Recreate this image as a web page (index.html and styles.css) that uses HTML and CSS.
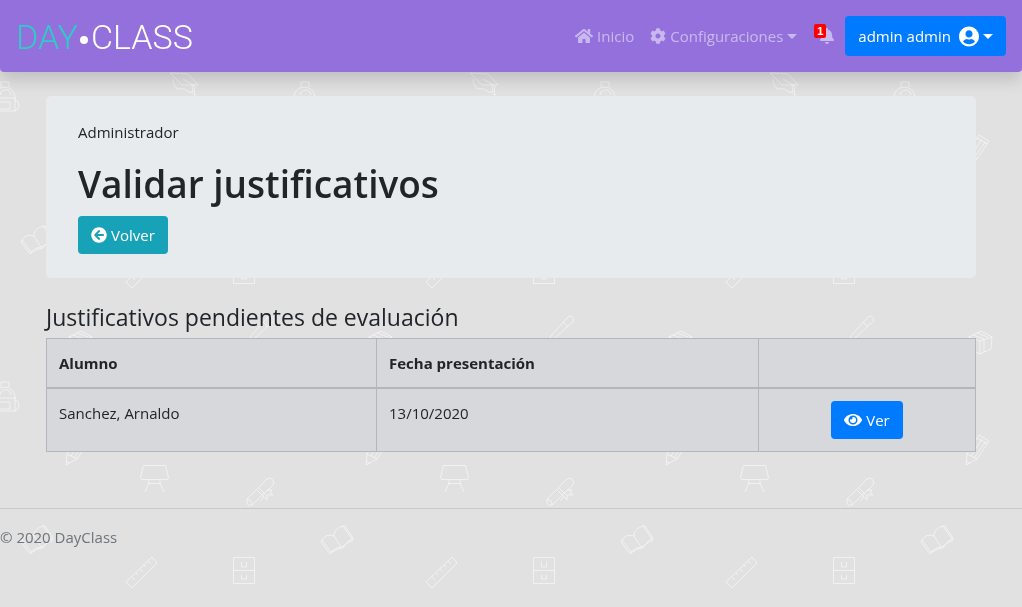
FILE: index.html
```html
<!DOCTYPE html>
<html lang="es">
<head>
<meta charset="utf-8">
<meta name="viewport" content="width=device-width, initial-scale=1">
<title>DayClass - Validar justificativos</title>
<link rel="stylesheet" href="styles.css">
</head>
<body>
<svg class="backdrop" aria-hidden="true">
  <defs>
    <pattern id="school" width="300" height="300" patternUnits="userSpaceOnUse">
      <g class="doodle">
        <g id="backpack"><path d="M1 87v-5h8v5M-6 97C-5 84 14 84 15 97v14h-20zM0 95c1-7 10-7 11 0M-6 98h22M-1 102h11v7h-11zM15 100q4 1 4 5t-4 6M-5 100q-4 1-4 5t4 6"/></g>
        <use href="#backpack" x="300"/>
        <path d="M170 73l18 1 10 11-16 0zM173 79c0 4 2 9 5 10q8-1 10 3h5l-1-7M183 79l12 7-1 9 2-1"/>
        <path d="M22 240C26 234 30 235 34 236C34 230 38 228 43 226L52 239C46 241 47 246 41 247Q36 247 31 252zM34 236L41 247M22 240l-1 2 9 12 2-2M43 226l2 0 8 12-1 3q-6 1-9 7-6 0-12 5"/>
        <path d="M152 257l5 6-25 25-6-6zM148 261l3 3M144 265l2 2M140 269l3 3M136 273l2 2M132 277l3 3"/>
        <path d="M233.500 257.500h21v26h-21zM233 270.500h22M241.500 262v5h5v-5M241.500 275v4h5v-4"/>
        <path d="M250 37l17-19q4-4 6 0t-3 6l-17 16zM263 22l5 5"/>
        <path d="M69 37l12-6 11 6-1 12-11 5-11-5zM69 37l11 4 12-4M80 41v13M73 35l11 4M77 33l11 4M84 39v13"/>
        <path d="M67 154l12-19 10 6-12 18-11 6zM67 154l10 5M71 156l11-17M74 158l12-17M66 161l3 2M77 138l10 6"/>
        <path d="M143.500 165.500h22l3 12-1 2h-26l-1-2zM149 180v3M160 180v3M149 183l-4 9M160 183l4 9M148 183.500h13"/>
        <path d="M247 199l20-20q4-2 6 1t-1 6l-20 19q-6 2-5-6zM247 200q5-1 5 5M259 188l7 7M257 190l7 7M267 190l5 0-2 3 3 2-6 0 0 5-3-3-4 4"/>
      </g>
    </pattern>
  </defs>
  <rect width="100%" height="100%" fill="url(#school)"/>
</svg>

<header class="navbar">
  <a class="brand" href="#" aria-label="DAY CLASS"><span class="brand-day">DAY</span><span class="brand-dot"></span><span>CLASS</span></a>
  <nav class="nav">
    <a class="nav-link" href="#">
      <svg class="icon icon-wide" viewBox="0 0 576 512"><path d="M280.370 148.260L96 300.110V464a16 16 0 0 0 16 16l112.060-.29a16 16 0 0 0 15.920-16V368a16 16 0 0 1 16-16h64a16 16 0 0 1 16 16v95.640a16 16 0 0 0 16 16.050L464 480a16 16 0 0 0 16-16V300L295.670 148.260a12.190 12.190 0 0 0-15.300 0zM571.600 251.470L488 182.560V44.050a12 12 0 0 0-12-12h-56a12 12 0 0 0-12 12v72.610L318.470 43a48 48 0 0 0-61 0L4.340 251.470a12 12 0 0 0-1.600 16.900l25.500 31A12 12 0 0 0 45.150 301l235.220-193.740a12.190 12.190 0 0 1 15.300 0L530.900 301a12 12 0 0 0 16.900-1.600l25.500-31a12 12 0 0 0-1.700-16.930z"/></svg>
      <span>Inicio</span>
    </a>
    <a class="nav-link" href="#">
      <svg class="icon" viewBox="0 0 512 512"><path d="M487.400 315.700l-42.600-24.600c4.300-23.200 4.300-47 0-70.200l42.600-24.600c4.900-2.800 7.100-8.600 5.500-14-11.100-35.600-30-67.800-54.700-94.600-3.800-4.100-10-5.100-14.800-2.300L380.800 110c-17.900-15.400-38.500-27.300-60.800-35.100V25.800c0-5.600-3.900-10.500-9.400-11.700-36.700-8.200-74.300-7.800-109.200 0-5.500 1.200-9.400 6.100-9.400 11.700V75c-22.200 7.900-42.800 19.800-60.800 35.100L88.700 85.500c-4.900-2.800-11-1.900-14.800 2.300-24.700 26.700-43.600 58.900-54.700 94.600-1.700 5.400.6 11.200 5.500 14L67.300 221c-4.300 23.200-4.300 47 0 70.200l-42.600 24.600c-4.900 2.800-7.100 8.600-5.500 14 11.100 35.600 30 67.800 54.700 94.600 3.800 4.100 10 5.100 14.800 2.300l42.600-24.600c17.900 15.400 38.500 27.300 60.800 35.100v49.200c0 5.600 3.900 10.500 9.400 11.700 36.700 8.200 74.300 7.800 109.200 0 5.500-1.200 9.400-6.100 9.400-11.700v-49.200c22.200-7.900 42.800-19.800 60.800-35.100l42.600 24.600c4.900 2.800 11 1.900 14.800-2.300 24.700-26.700 43.600-58.900 54.700-94.600 1.500-5.500-.7-11.300-5.600-14.100zM256 336c-44.100 0-80-35.900-80-80s35.900-80 80-80 80 35.900 80 80-35.900 80-80 80z"/></svg>
      <span>Configuraciones</span><span class="caret"></span>
    </a>
    <a class="nav-link bell" href="#" aria-label="Notificaciones">
      <svg class="icon icon-bell" viewBox="0 0 448 512"><path d="M224 512c35.320 0 63.970-28.650 63.970-64H160.030c0 35.350 28.650 64 63.970 64zm215.390-149.710c-19.320-20.760-55.470-51.990-55.470-154.290 0-77.700-54.480-139.900-127.940-155.160V32c0-17.670-14.320-32-31.980-32s-31.980 14.330-31.980 32v20.840C118.560 68.100 64.080 130.300 64.080 208c0 102.300-36.150 133.530-55.470 154.290-6 6.450-8.660 14.160-8.610 21.710.11 16.400 12.980 32 32.100 32h383.800c19.120 0 32-15.600 32.100-32 .05-7.550-2.610-15.270-8.610-21.710z"/></svg>
      <span class="badge">1</span>
    </a>
    <button class="btn btn-primary user" type="button">
      <span>admin admin</span>
      <svg class="icon-user" viewBox="0 0 496 512"><path d="M248 8C111 8 0 119 0 256s111 248 248 248 248-111 248-248S385 8 248 8zm0 96c48.600 0 88 39.400 88 88s-39.400 88-88 88-88-39.400-88-88 39.400-88 88-88zm0 344c-58.700 0-111.300-26.600-146.500-68.200 18.800-35.400 55.600-59.800 98.500-59.800 2.400 0 4.800.4 7.100 1.100 13 4.200 26.600 6.900 40.900 6.900 14.300 0 28-2.700 40.900-6.900 2.300-.7 4.700-1.100 7.100-1.100 42.900 0 79.700 24.400 98.500 59.800C359.300 421.400 306.700 448 248 448z"/></svg>
      <span class="caret"></span>
    </button>
  </nav>
</header>

<main class="container">
  <section class="jumbotron">
    <p class="role">Administrador</p>
    <h1 class="title">Validar justificativos</h1>
    <a class="btn btn-info" href="#">
      <svg class="icon" viewBox="0 0 512 512"><path d="M256 504C119 504 8 393 8 256S119 8 256 8s248 111 248 248-111 248-248 248zm28.900-143.600L209.400 288H392c13.300 0 24-10.700 24-24v-16c0-13.300-10.700-24-24-24H209.400l75.500-72.400c9.700-9.300 9.900-24.800.4-34.300l-11-10.900c-9.400-9.400-24.600-9.400-33.900 0L107.700 239c-9.400 9.400-9.400 24.600 0 33.900l132.700 132.700c9.400 9.400 24.600 9.400 33.900 0l11-10.900c9.500-9.500 9.300-25-.4-34.300z"/></svg>
      <span>Volver</span>
    </a>
  </section>

  <h2 class="subtitle">Justificativos pendientes de evaluación</h2>
  <table class="table">
    <colgroup><col class="col-student"><col class="col-date"><col></colgroup>
    <thead>
      <tr><th scope="col">Alumno</th><th scope="col">Fecha presentación</th><th></th></tr>
    </thead>
    <tbody>
      <tr>
        <td>Sanchez, Arnaldo</td>
        <td>13/10/2020</td>
        <td class="action"><a class="btn btn-primary" href="#">
          <svg class="icon icon-wide" viewBox="0 0 576 512"><path d="M572.520 241.400C518.290 135.590 410.930 64 288 64S57.680 135.640 3.480 241.410a32.350 32.350 0 0 0 0 29.190C57.710 376.410 165.070 448 288 448s230.320-71.640 284.520-177.410a32.350 32.350 0 0 0 0-29.190zM288 400a144 144 0 1 1 144-144 143.930 143.930 0 0 1-144 144zm0-240a95.310 95.310 0 0 0-25.310 3.790 47.850 47.850 0 0 1-66.900 66.900A95.780 95.780 0 1 0 288 160z"/></svg>
          <span>Ver</span></a></td>
      </tr>
    </tbody>
  </table>
</main>

<footer class="footer">© 2020 DayClass</footer>
</body>
</html>
```
FILE: styles.css
```css
*, *::before, *::after { box-sizing: border-box; }

body {
  margin: 0;
  min-height: 100vh;
  background: #e1e1e1;
  color: #212529;
  font-family: "Segoe UI", "Open Sans", "Noto Sans", sans-serif;
  font-size: 15px;
  line-height: 24px;
}

a { color: inherit; text-decoration: none; }
svg { flex: none; fill: currentColor; }

.backdrop {
  position: fixed;
  inset: 0;
  width: 100%;
  height: 100%;
  z-index: -1;
}

.doodle {
  fill: none;
  stroke: #fff;
  stroke-opacity: 0.55;
  stroke-width: 1;
  stroke-linejoin: round;
}

.navbar {
  display: flex;
  align-items: center;
  justify-content: space-between;
  padding: 16px;
  background: #9370db;
  border-radius: 0 0 4px 4px;
  box-shadow: 0 8px 16px rgba(0, 0, 0, 0.15);
}

.brand {
  display: flex;
  align-items: center;
  padding-top: 2px;
  color: #fff;
  font-family: Roboto, sans-serif;
  font-size: 34px;
  font-weight: 300;
  line-height: 38px;
}

.brand-day { color: #2fcbc8; }

.brand-dot {
  width: 8px;
  height: 8px;
  margin: 6px 3px 0 2px;
  border-radius: 50%;
  background: #fff;
}

.nav { display: flex; align-items: center; }

.nav-link {
  display: flex;
  align-items: center;
  gap: 4px;
  padding: 8px;
  color: rgba(255, 255, 255, 0.5);
}

.icon { width: 16px; height: 16px; }
.icon-wide { width: 18px; }
.icon-bell { width: 14px; }

.caret {
  border: 5px solid transparent;
  border-top-color: currentColor;
  border-bottom: 0;
}

.bell { position: relative; padding: 12px 11px 12px 15px; }

.badge {
  position: absolute;
  top: 8px;
  left: 9px;
  padding: 0 3px;
  border-radius: 2px;
  background: #f00;
  color: #fff;
  font-family: "Liberation Sans", Arial, sans-serif;
  font-size: 11px;
  font-weight: 700;
  line-height: 14px;
}

.btn {
  display: inline-flex;
  align-items: center;
  gap: 4px;
  padding: 7px 13px;
  border: 0;
  border-radius: 4px;
  color: #fff;
  font: inherit;
  vertical-align: top;
}

.btn-primary { background: #007bff; }
.btn-info { background: #17a2b8; }
.user { height: 40px; }
.icon-user { width: 20px; height: 21px; margin-left: 4px; }

.container {
  max-width: 960px;
  margin: 24px auto 56px;
  padding: 0 15px;
}

.jumbotron {
  margin-bottom: 24px;
  padding: 24px 32px;
  border-radius: 5px;
  background: #e7ebee;
}

.role { margin: 0 0 16px; }

.title {
  margin: 0 0 8px;
  font-size: 37px;
  font-weight: 600;
  line-height: 48px;
}

.subtitle {
  margin: 0 0 6px;
  font-size: 23px;
  font-weight: 400;
  line-height: 30px;
}

.table {
  width: 100%;
  table-layout: fixed;
  border-collapse: collapse;
  background: #d6d8db;
}

.col-student { width: 330px; }
.col-date { width: 382px; }

.table th,
.table td {
  padding: 12px;
  border: 1px solid #b3b7bb;
  text-align: left;
  vertical-align: top;
}

.table th { border-bottom-width: 2px; font-weight: 700; }
.table .action { text-align: center; }

.footer {
  padding: 16px 0;
  border-top: 1px solid #c9c9cb;
  color: #6c757d;
}
```
